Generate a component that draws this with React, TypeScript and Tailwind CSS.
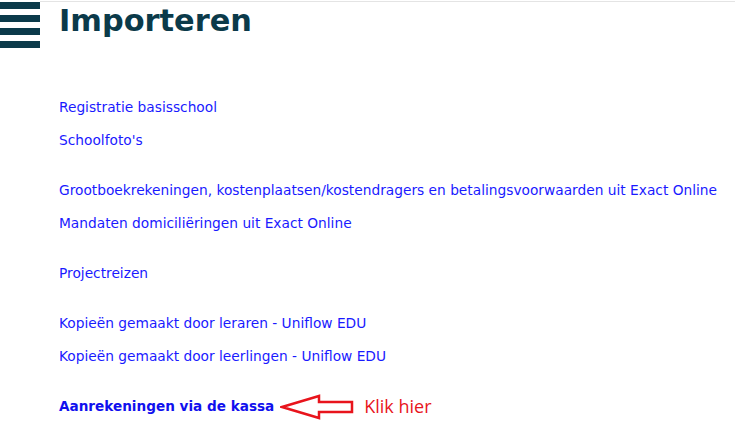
import React from 'react'

const groups = [
  ['Registratie basisschool', "Schoolfoto's"],
  [
    'Grootboekrekeningen, kostenplaatsen/kostendragers en betalingsvoorwaarden uit Exact Online',
    'Mandaten domiciliëringen uit Exact Online',
  ],
  ['Projectreizen'],
  ['Kopieën gemaakt door leraren - Uniflow EDU', 'Kopieën gemaakt door leerlingen - Uniflow EDU'],
]

export default function App() {
  return (
    <div className="w-[735px] h-[437px] bg-white overflow-hidden relative" style={{ fontFamily: '"DejaVu Sans", Verdana, sans-serif' }}>
      <div className="absolute left-[40px] right-0 top-[1px] h-px bg-[#e4e4e4]" />
      <div className="flex items-start">
        {/* hamburger */}
        <div className="flex flex-col gap-[6px] pt-[2px] w-[40px]">
          <div className="h-[7px] bg-[#0b3a4a]" />
          <div className="h-[7px] bg-[#0b3a4a]" />
          <div className="h-[7px] bg-[#0b3a4a]" />
          <div className="h-[7px] bg-[#0b3a4a]" />
        </div>
        <h1 className="ml-[19px] mt-[2px] text-[30.4px] leading-[38px] font-bold text-[#0b3a4a]">Importeren</h1>
      </div>

      <div className="pl-[59px] pt-[43px] flex flex-col gap-[17px] text-[13.75px] text-[#1a1aff]">
        {groups.map((g, i) => (
          <div key={i} className="flex flex-col">
            {g.map((t) => (
              <a key={t} className="h-[33px] leading-[33px] whitespace-nowrap">{t}</a>
            ))}
          </div>
        ))}
        <div className="flex items-center h-[33px]">
          <a className="font-bold text-[#1010ee] text-[13.6px]">Aanrekeningen via de kassa</a>
          <svg width="76" height="26" viewBox="0 0 76 26" className="ml-[6px]">
            <path d="M2 13 L39 2 L39 8 L72 8 L72 18 L39 18 L39 24 Z" fill="none" stroke="#e8141c" strokeWidth="2.5" strokeLinejoin="miter" />
          </svg>
          <span className="ml-[8px] text-[18px] text-[#e8141c]" style={{ fontFamily: '"Open Sans", "Liberation Sans", sans-serif' }}>Klik hier</span>
        </div>
      </div>
    </div>
  )
}
